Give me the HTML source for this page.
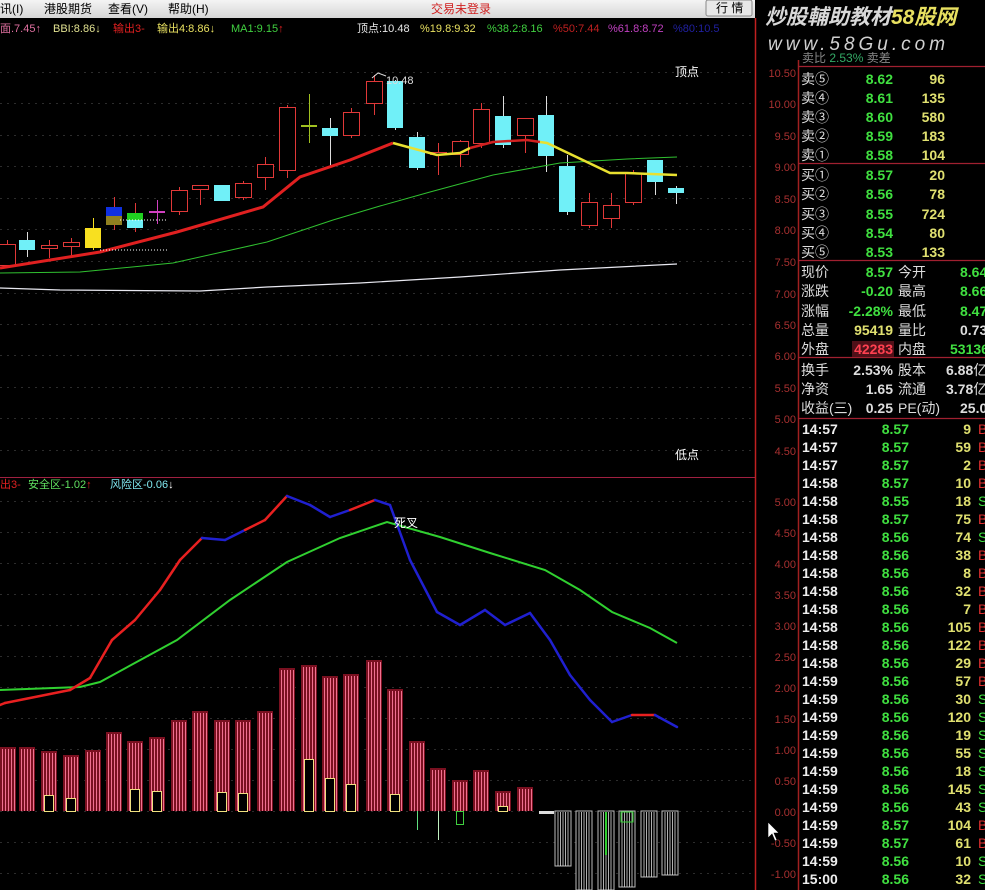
<!DOCTYPE html>
<html><head><meta charset="utf-8"><style>
html,body{margin:0;padding:0;background:#000;width:985px;height:890px;overflow:hidden}
svg{display:block}
text{font-family:"Liberation Sans","Noto Sans CJK SC",sans-serif}
</style></head><body>
<svg id="s" width="985" height="890" viewBox="0 0 985 890" xmlns="http://www.w3.org/2000/svg">
<defs>
<linearGradient id="mb" x1="0" y1="0" x2="0" y2="1"><stop offset="0" stop-color="#f4f4f4"/><stop offset="1" stop-color="#d6d6d6"/></linearGradient>
</defs>
<rect width="985" height="890" fill="#000"/>
<!-- menu bar -->
<rect x="0" y="0" width="755" height="18" fill="url(#mb)"/>
<g font-size="12" fill="#000">
<text x="0" y="13">讯(I)</text><text x="44" y="13">港股期货</text><text x="108" y="13">查看(V)</text><text x="168" y="13">帮助(H)</text>
</g>
<text x="431" y="13" font-size="12" fill="#d02020">交易未登录</text>
<rect x="706" y="0" width="46" height="16" rx="2" fill="#e8e8e8" stroke="#888"/>
<text x="716" y="12" font-size="12" fill="#000">行 情</text>
<!-- logo -->
<text x="765" y="24" font-size="21" fill="#d8d8d8" font-style="italic" font-weight="bold">炒股輔助教材<tspan fill="#e8e060">58股网</tspan></text>
<text x="768" y="50" font-size="19" fill="#d0d0d0" font-style="italic" font-family="Liberation Mono,monospace" letter-spacing="4">www.58Gu.com</text>
<!-- header upper -->
<g font-size="11">
<text x="0" y="32" fill="#e070a0">面.7.45↑</text>
<text x="53" y="32" fill="#e0e090">BBI:8.86↓</text>
<text x="113" y="32" fill="#e02020">输出3-</text>
<text x="157" y="32" fill="#e8e060">输出4:8.86↓</text>
<text x="231" y="32" fill="#40d040">MA1:9.15<tspan fill="#e02020">↑</tspan></text>
<text x="357" y="32" fill="#e8e8e8">顶点:10.48</text>
<text x="420" y="32" fill="#e8e060">%19.8:9.32</text>
<text x="487" y="32" fill="#40d040">%38.2:8.16</text>
<text x="553" y="32" fill="#c02020">%50:7.44</text>
<text x="608" y="32" fill="#c040c0">%61.8:8.72</text>
<text x="673" y="32" fill="#2020a0">%80:10.5</text>
</g>
<g id="grid" stroke="#2c2c2c" stroke-dasharray="2,5"></g>
<!-- axes -->
<line x1="755.5" y1="18" x2="755.5" y2="890" stroke="#c02020" stroke-width="1.5"/>
<line x1="798.5" y1="60" x2="798.5" y2="890" stroke="#a02020" stroke-width="1.5"/>
<line x1="0" y1="477.5" x2="755" y2="477.5" stroke="#a02040"/>
<g font-size="11" fill="#a83030" text-anchor="end" id="axU">
<text x="796" y="77">10.50</text><text x="796" y="108">10.00</text><text x="796" y="140">9.50</text><text x="796" y="171">9.00</text><text x="796" y="203">8.50</text><text x="796" y="234">8.00</text><text x="796" y="266">7.50</text><text x="796" y="298">7.00</text><text x="796" y="329">6.50</text><text x="796" y="360">6.00</text><text x="796" y="392">5.50</text><text x="796" y="423">5.00</text><text x="796" y="455">4.50</text>
<text x="796" y="506">5.00</text><text x="796" y="537">4.50</text><text x="796" y="568">4.00</text><text x="796" y="599">3.50</text><text x="796" y="630">3.00</text><text x="796" y="661">2.50</text><text x="796" y="692">2.00</text><text x="796" y="723">1.50</text><text x="796" y="754">1.00</text><text x="796" y="785">0.50</text><text x="796" y="816">0.00</text><text x="796" y="847">-0.50</text><text x="796" y="878">-1.00</text>
</g>
<g id="cand"></g>
<!-- MA lines -->
<polyline fill="none" stroke="#e8e8f0" stroke-width="1.2" points="0,288 60,290 200,291 267,287 360,283 460,277 560,270 677,264"/>
<polyline fill="none" stroke="#30c030" stroke-width="1" points="0,273 80,272 173,263 267,242 333,220 380,206 430,192 493,175 560,163 627,159 677,157"/>
<polyline fill="none" stroke="#e02020" stroke-width="3" points="0,268 100,252 177,232 263,207 300,177 350,160 393,143"/>
<polyline fill="none" stroke="#e8e030" stroke-width="2.5" points="393,143 437,155 460,153 470,148"/>
<polyline fill="none" stroke="#d02020" stroke-width="2.5" points="470,148 493,142 527,140 540,142"/>
<polyline fill="none" stroke="#e8e030" stroke-width="2.5" points="540,142 547,143 610,173 627,173 677,175"/>
<line x1="120" y1="220" x2="167" y2="220" stroke="#fff" stroke-dasharray="1,2"/>
<line x1="100" y1="250" x2="167" y2="250" stroke="#fff" stroke-dasharray="1,2"/>
<text x="386" y="84" font-size="11" fill="#ddd">10.48</text>
<polyline points="372,78 378,73 386,76" fill="none" stroke="#ddd"/>
<text x="675" y="76" font-size="12" fill="#fff">顶点</text>
<text x="675" y="459" font-size="12" fill="#fff">低点</text>
<!-- lower header -->
<g font-size="11">
<text x="0" y="488" fill="#e02020">出3-</text>
<text x="28" y="488" fill="#60e060">安全区-1.02<tspan fill="#e02020">↑</tspan></text>
<text x="110" y="488" fill="#80e8f0">风险区-0.06<tspan fill="#fff">↓</tspan></text>
</g>
<g id="bars"></g>
<polyline fill="none" stroke="#30d030" stroke-width="2" points="0,690 80,687 100,682 177,640 230,600 287,562 340,538 387,522 440,537 490,553 545,570 580,590 612,612 650,628 677,643"/>
<g id="rb" fill="none" stroke-width="2.5"></g>
<text x="394" y="527" font-size="12" fill="#fff">死叉</text>
<!-- cursor -->
<path d="M768,822 L768,838 L772,834 L775,841 L777,840 L774,833 L779,833 Z" fill="#fff" stroke="#000" stroke-width="0.6"/>
<!-- right panel -->
<g stroke="#a02030" stroke-width="1.2">
<line x1="798" y1="163.5" x2="985" y2="163.5"/><line x1="798" y1="260.5" x2="985" y2="260.5"/><line x1="798" y1="357.5" x2="985" y2="357.5"/><line x1="798" y1="418.5" x2="985" y2="418.5"/>
<line x1="798" y1="66.5" x2="985" y2="66.5"/>
</g>
<text x="802" y="62" font-size="12" fill="#888">卖比 <tspan fill="#3a6">2.53%</tspan> 卖差</text>
<g font-size="14" font-weight="bold" id="ob">
<g fill="#ddd" font-weight="normal"><text x="801" y="84">卖⑤</text><text x="801" y="103">卖④</text><text x="801" y="122">卖③</text><text x="801" y="141">卖②</text><text x="801" y="160">卖①</text>
<text x="801" y="180">买①</text><text x="801" y="199">买②</text><text x="801" y="219">买③</text><text x="801" y="238">买④</text><text x="801" y="257">买⑤</text></g>
<g fill="#40e040" text-anchor="end"><text x="893" y="84">8.62</text><text x="893" y="103">8.61</text><text x="893" y="122">8.60</text><text x="893" y="141">8.59</text><text x="893" y="160">8.58</text>
<text x="893" y="180">8.57</text><text x="893" y="199">8.56</text><text x="893" y="219">8.55</text><text x="893" y="238">8.54</text><text x="893" y="257">8.53</text></g>
<g fill="#e0e070" text-anchor="end"><text x="945" y="84">96</text><text x="945" y="103">135</text><text x="945" y="122">580</text><text x="945" y="141">183</text><text x="945" y="160">104</text>
<text x="945" y="180">20</text><text x="945" y="199">78</text><text x="945" y="219">724</text><text x="945" y="238">80</text><text x="945" y="257">133</text></g>
</g>
<g font-size="14">
<g fill="#ddd"><text x="801" y="277">现价</text><text x="801" y="296">涨跌</text><text x="801" y="316">涨幅</text><text x="801" y="335">总量</text><text x="801" y="354">外盘</text>
<text x="898" y="277">今开</text><text x="898" y="296">最高</text><text x="898" y="316">最低</text><text x="898" y="335">量比</text><text x="898" y="354">内盘</text>
<text x="801" y="375">换手</text><text x="801" y="394">净资</text><text x="801" y="413">收益(三)</text><text x="898" y="375">股本</text><text x="898" y="394">流通</text><text x="898" y="413">PE(动)</text></g>
<g font-weight="bold" text-anchor="end">
<text x="893" y="277" fill="#40e040">8.57</text><text x="893" y="296" fill="#40e040">-0.20</text><text x="893" y="316" fill="#40e040">-2.28%</text><text x="893" y="335" fill="#e0e070">95419</text>
<rect x="852" y="341" width="42" height="16" fill="#501018"/><text x="893" y="354" fill="#ff4050">42283</text>
<text x="893" y="375" fill="#ddd">2.53%</text><text x="893" y="394" fill="#ddd">1.65</text><text x="893" y="413" fill="#ddd">0.25</text></g>
<g font-weight="bold"><text x="960" y="277" fill="#40e040">8.64</text><text x="960" y="296" fill="#40e040">8.66</text><text x="960" y="316" fill="#40e040">8.47</text><text x="960" y="335" fill="#ddd">0.73</text><text x="950" y="354" fill="#40e040">53136</text>
<text x="946" y="375" fill="#ddd">6.88<tspan font-weight="normal">亿</tspan></text><text x="946" y="394" fill="#ddd">3.78<tspan font-weight="normal">亿</tspan></text><text x="960" y="413" fill="#ddd">25.0</text></g>
</g>
<g id="tr" font-size="14" font-weight="bold"></g>
<g id="trt" font-size="14" font-weight="bold">
<g fill="#eee"><text x="802" y="434">14:57</text><text x="802" y="452">14:57</text><text x="802" y="470">14:57</text><text x="802" y="488">14:58</text><text x="802" y="506">14:58</text><text x="802" y="524">14:58</text><text x="802" y="542">14:58</text><text x="802" y="560">14:58</text><text x="802" y="578">14:58</text><text x="802" y="596">14:58</text><text x="802" y="614">14:58</text><text x="802" y="632">14:58</text><text x="802" y="650">14:58</text><text x="802" y="668">14:58</text><text x="802" y="686">14:59</text><text x="802" y="704">14:59</text><text x="802" y="722">14:59</text><text x="802" y="740">14:59</text><text x="802" y="758">14:59</text><text x="802" y="776">14:59</text><text x="802" y="794">14:59</text><text x="802" y="812">14:59</text><text x="802" y="830">14:59</text><text x="802" y="848">14:59</text><text x="802" y="866">14:59</text><text x="802" y="884">15:00</text></g>
<g fill="#40e040" text-anchor="end"><text x="909" y="434">8.57</text><text x="909" y="452">8.57</text><text x="909" y="470">8.57</text><text x="909" y="488">8.57</text><text x="909" y="506">8.55</text><text x="909" y="524">8.57</text><text x="909" y="542">8.56</text><text x="909" y="560">8.56</text><text x="909" y="578">8.56</text><text x="909" y="596">8.56</text><text x="909" y="614">8.56</text><text x="909" y="632">8.56</text><text x="909" y="650">8.56</text><text x="909" y="668">8.56</text><text x="909" y="686">8.56</text><text x="909" y="704">8.56</text><text x="909" y="722">8.56</text><text x="909" y="740">8.56</text><text x="909" y="758">8.56</text><text x="909" y="776">8.56</text><text x="909" y="794">8.56</text><text x="909" y="812">8.56</text><text x="909" y="830">8.57</text><text x="909" y="848">8.57</text><text x="909" y="866">8.56</text><text x="909" y="884">8.56</text></g>
<g fill="#e0e070" text-anchor="end"><text x="971" y="434">9</text><text x="971" y="452">59</text><text x="971" y="470">2</text><text x="971" y="488">10</text><text x="971" y="506">18</text><text x="971" y="524">75</text><text x="971" y="542">74</text><text x="971" y="560">38</text><text x="971" y="578">8</text><text x="971" y="596">32</text><text x="971" y="614">7</text><text x="971" y="632">105</text><text x="971" y="650">122</text><text x="971" y="668">29</text><text x="971" y="686">57</text><text x="971" y="704">30</text><text x="971" y="722">120</text><text x="971" y="740">19</text><text x="971" y="758">55</text><text x="971" y="776">18</text><text x="971" y="794">145</text><text x="971" y="812">43</text><text x="971" y="830">104</text><text x="971" y="848">61</text><text x="971" y="866">10</text><text x="971" y="884">32</text></g>
<g font-weight="normal"><text x="978" y="434" fill="#e03030">B</text><text x="978" y="452" fill="#e03030">B</text><text x="978" y="470" fill="#e03030">B</text><text x="978" y="488" fill="#e03030">B</text><text x="978" y="506" fill="#40e040">S</text><text x="978" y="524" fill="#e03030">B</text><text x="978" y="542" fill="#40e040">S</text><text x="978" y="560" fill="#e03030">B</text><text x="978" y="578" fill="#e03030">B</text><text x="978" y="596" fill="#e03030">B</text><text x="978" y="614" fill="#e03030">B</text><text x="978" y="632" fill="#e03030">B</text><text x="978" y="650" fill="#e03030">B</text><text x="978" y="668" fill="#e03030">B</text><text x="978" y="686" fill="#e03030">B</text><text x="978" y="704" fill="#40e040">S</text><text x="978" y="722" fill="#40e040">S</text><text x="978" y="740" fill="#40e040">S</text><text x="978" y="758" fill="#40e040">S</text><text x="978" y="776" fill="#40e040">S</text><text x="978" y="794" fill="#40e040">S</text><text x="978" y="812" fill="#40e040">S</text><text x="978" y="830" fill="#e03030">B</text><text x="978" y="848" fill="#e03030">B</text><text x="978" y="866" fill="#40e040">S</text><text x="978" y="884" fill="#40e040">S</text></g>
</g>
</svg>
<script>
var NS="http://www.w3.org/2000/svg";
function el(p,t,a){var e=document.createElementNS(NS,t);for(var k in a)e.setAttribute(k,a[k]);p.appendChild(e);return e;}
var g=document.getElementById('grid');
[72,103,135,166,198,229,261,293,324,355,387,418,450,501,532,563,594,625,656,687,718,749,780,811,842,873].forEach(function(y){el(g,'line',{x1:0,y1:y+.5,x2:755,y2:y+.5});});
var c=document.getElementById('cand');
// x, wickTop, wickBot, bodyTop, bodyBot, type
var C=[[7,240,268,244,265,'r'],[27,232,257,240,250,'c'],[49,240,258,245,248,'r'],[71,238,258,242,246,'r'],[93,218,250,228,248,'y'],[114,197,230,207,225,'b'],[135,203,232,213,228,'g'],[157,200,224,211,213,'m'],[179,187,215,190,211,'r'],[200,185,205,185,189,'r'],[222,185,201,185,201,'c'],[243,181,200,183,197,'r'],[265,157,190,164,177,'r'],[287,105,178,107,170,'r'],[309,94,143,125,127,'gy'],[330,118,168,128,136,'c'],[351,108,138,112,135,'r'],[374,75,115,81,103,'r'],[395,80,130,81,128,'c'],[417,132,170,137,168,'c'],[438,143,175,152,154,'r'],[460,140,167,141,154,'r'],[481,103,148,109,143,'r'],[503,96,148,116,145,'c'],[525,118,153,118,135,'r'],[546,96,172,115,156,'c'],[567,155,215,166,212,'c'],[589,193,228,202,225,'r'],[611,193,228,205,218,'r'],[633,170,205,173,202,'r'],[655,160,195,160,182,'c'],[676,186,204,188,193,'c']];
C.forEach(function(d){var x=d[0],w=8,col={r:'#e03838',c:'#70f0f8',y:'#f8e020',m:'#d040c0',gy:'#a0c020'}[d[5]]||'#e03838';
 el(c,'line',{x1:x+.5,y1:d[1],x2:x+.5,y2:d[2],stroke:d[5]=='c'?'#ddd':col});
 if(d[5]=='r'){el(c,'rect',{x:x-w+.5,y:d[3]+.5,width:2*w,height:Math.max(1,d[4]-d[3]),fill:'#000',stroke:col});}
 else if(d[5]=='b'){el(c,'rect',{x:x-w,y:d[3],width:2*w,height:9,fill:'#1030e0'});el(c,'rect',{x:x-w,y:d[3]+9,width:2*w,height:d[4]-d[3]-9,fill:'#908020'});}
 else if(d[5]=='g'){el(c,'rect',{x:x-w,y:d[3],width:2*w,height:7,fill:'#20d020'});el(c,'rect',{x:x-w,y:d[3]+7,width:2*w,height:d[4]-d[3]-7,fill:'#70f0f8'});}
 else el(c,'rect',{x:x-w,y:d[3],width:2*w,height:Math.max(2,d[4]-d[3]),fill:col});
});
// bars
var b=document.getElementById('bars');
var R=[[8,747],[27,747],[49,751],[71,755],[93,750],[114,732],[135,741],[157,737],[179,720],[200,711],[222,720],[243,720],[265,711],[287,668],[309,665],[330,676],[351,674],[374,660],[395,689],[417,741],[438,768],[460,780],[481,770],[503,791],[525,787]];
R.forEach(function(d){var x=d[0];el(b,'rect',{x:x-8,y:d[1],width:16,height:811-d[1],fill:'#7a1020'});
 for(var i=-6;i<=6;i+=3)el(b,'line',{x1:x+i+.5,y1:d[1]+2,x2:x+i+.5,y2:811,stroke:'#f07090','stroke-width':1});});
[[49,795],[71,798],[135,789],[157,791],[222,792],[243,793],[309,759],[330,778],[351,784],[395,794],[503,806]].forEach(function(d){el(b,'rect',{x:d[0]-4.5,y:d[1]+.5,width:9,height:811-d[1],fill:'#000',stroke:'#f0e080'});});
el(b,'line',{x1:417.5,y1:811,x2:417.5,y2:830,stroke:'#60e080'});el(b,'line',{x1:438.5,y1:811,x2:438.5,y2:840,stroke:'#c0f0c0'});
el(b,'rect',{x:456.5,y:811.5,width:7,height:13,fill:'none',stroke:'#40d040'});
el(b,'rect',{x:539,y:811,width:15,height:3,fill:'#ddd'});
[[563,866],[584,890],[606,890],[627,887],[649,877],[670,875]].forEach(function(d){var x=d[0];el(b,'rect',{x:x-8,y:811,width:16,height:d[1]-811,fill:'#000',stroke:'#bbb'});
 for(var i=-5;i<=5;i+=2.5)el(b,'line',{x1:x+i,y1:812,x2:x+i,y2:d[1],stroke:'#ddd','stroke-width':0.8});});
el(b,'line',{x1:606,y1:812,x2:606,y2:855,stroke:'#30d030','stroke-width':2});
el(b,'rect',{x:621,y:812,width:12,height:10,fill:'none',stroke:'#30d030'});
// red/blue line
var P=[[0,705,'b'],[5,703,'r'],[70,690,'r'],[90,678,'r'],[112,640,'r'],[135,620,'r'],[160,590,'r'],[180,560,'r'],[202,538,'r'],[225,540,'b'],[245,530,'b'],[265,520,'r'],[287,496,'r'],[310,505,'b'],[330,517,'b'],[350,510,'b'],[375,500,'r'],[390,505,'b'],[410,560,'b'],[437,612,'b'],[460,625,'b'],[485,610,'b'],[505,625,'b'],[530,613,'b'],[550,640,'b'],[570,675,'b'],[590,700,'b'],[612,722,'b'],[632,715,'b'],[655,715,'r'],[677,727,'b']];
var rb=document.getElementById('rb');
for(var i=1;i<P.length;i++){el(rb,'line',{x1:P[i-1][0],y1:P[i-1][1],x2:P[i][0],y2:P[i][1],stroke:P[i][2]=='r'?'#e82020':'#2020d0','stroke-linecap':'round'});}
</script>
</body></html>
